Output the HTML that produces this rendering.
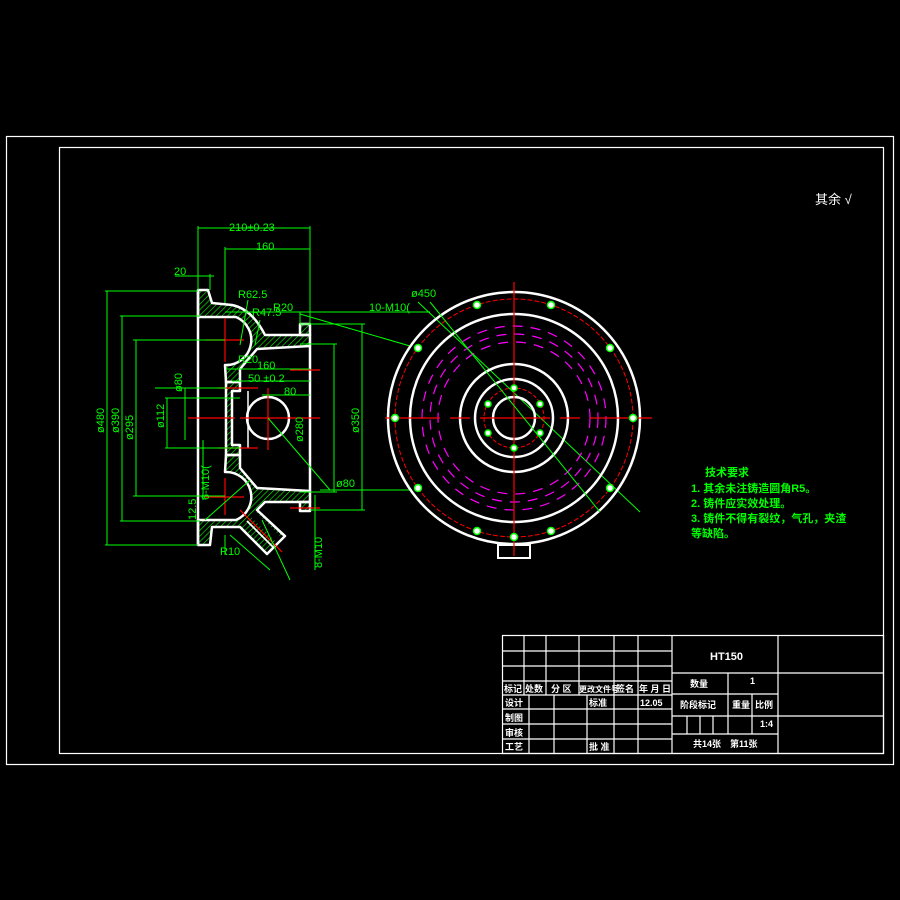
<!DOCTYPE html>
<html><head><meta charset="utf-8">
<style>
html,body{margin:0;padding:0;background:#000;}
svg{display:block}
text{font-family:"Liberation Sans","Noto Sans CJK SC",sans-serif;}
</style></head>
<body>
<svg width="900" height="900" viewBox="0 0 900 900" xmlns="http://www.w3.org/2000/svg">
<defs>
<pattern id="h" width="4" height="4" patternUnits="userSpaceOnUse" patternTransform="rotate(45)">
<line x1="0" y1="0" x2="0" y2="4" stroke="#0f0" stroke-width="1.2"/>
</pattern>
</defs>
<rect width="900" height="900" fill="#000"/>
<rect x="6.5" y="136.5" width="887" height="628" fill="none" stroke="#fff" stroke-width="1.2"/>
<rect x="59.5" y="147.5" width="824" height="606" fill="none" stroke="#fff" stroke-width="1.2"/>

<!-- ===== left section view ===== -->
<g stroke="#fff" stroke-width="2.5" fill="url(#h)" stroke-linejoin="round">
<!-- top -->
<path d="M226,382 L240,382 L240,369 L257,349 L310,346 L310,335 L265,335 Q252,309 232,305 L212,303 L208,290 L198,290 L198,317 L236,317 A25,25 0 0 1 225,365 Z"/>
<path d="M300,324 L310,324 L310,335 L300,335 Z"/>
<!-- middle wall -->
<path d="M226,382 L240,382 L240,391 L232,391 L232,445 L240,445 L240,455 L226,455 Z"/>
<!-- bottom -->
<path d="M226,455 L240,455 L240,468 L257,488 L310,491 L310,502 L265,502 L257,510 L285,536 L267,554 L240,527 L212,527 L210,545 L198,545 L198,520 L236,520 A25,25 0 0 0 225,472 Z"/>
<path d="M300,502 L310,502 L310,511 L300,511 Z"/>
</g>
<g stroke="#fff" stroke-width="2.5" fill="none">
<path d="M198,290 L198,545"/>
<path d="M310,346 L310,491"/>
<line x1="248" y1="391" x2="248" y2="448" stroke-width="1.5"/>
<path d="M253,514 L279,540" stroke="#000" stroke-width="7"/>
<path d="M247,521 L273,547" stroke="#fff" stroke-width="1.8"/>
<path d="M258,511 L283,535" stroke="#fff" stroke-width="1.8"/>
<circle cx="268" cy="418" r="21"/>
</g>
<g stroke="#f00" stroke-width="1.2">
<line x1="188" y1="418" x2="235" y2="418"/><line x1="240" y1="418" x2="320" y2="418"/>
<line x1="268" y1="388" x2="268" y2="450"/>
<line x1="205" y1="340" x2="244" y2="340"/><line x1="225" y1="318" x2="225" y2="362"/>
<line x1="205" y1="497" x2="244" y2="497"/><line x1="225" y1="478" x2="225" y2="515"/>
<line x1="218" y1="388" x2="258" y2="388"/><line x1="218" y1="448" x2="258" y2="448"/>
<line x1="290" y1="370" x2="320" y2="370"/><line x1="290" y1="508" x2="320" y2="508"/>
<line x1="240" y1="510" x2="282" y2="552"/>
</g>
<g stroke="#0f0" stroke-width="1" fill="none">
<line x1="198" y1="228" x2="310" y2="228"/><line x1="198" y1="226" x2="198" y2="290"/><line x1="310" y1="226" x2="310" y2="324"/>
<line x1="225" y1="249" x2="310" y2="249"/><line x1="225" y1="247" x2="225" y2="303"/>
<line x1="175" y1="276" x2="214" y2="276"/><line x1="210" y1="274" x2="210" y2="290"/>
<line x1="105" y1="291" x2="198" y2="291"/><line x1="107" y1="291" x2="107" y2="545"/><line x1="105" y1="545" x2="198" y2="545"/>
<line x1="120" y1="316" x2="200" y2="316"/><line x1="122" y1="316" x2="122" y2="521"/><line x1="120" y1="521" x2="200" y2="521"/>
<line x1="133" y1="340" x2="225" y2="340"/><line x1="136" y1="340" x2="136" y2="496"/><line x1="133" y1="496" x2="225" y2="496"/>
<line x1="155" y1="388" x2="226" y2="388"/><line x1="185" y1="388" x2="185" y2="440"/>
<line x1="165" y1="398" x2="240" y2="398"/><line x1="167" y1="398" x2="167" y2="448"/><line x1="165" y1="448" x2="240" y2="448"/>
<line x1="226" y1="369" x2="310" y2="369"/><line x1="232" y1="381" x2="310" y2="381"/><line x1="262" y1="395" x2="310" y2="395"/>
<line x1="300" y1="344" x2="337" y2="344"/><line x1="334" y1="344" x2="334" y2="492"/><line x1="300" y1="492" x2="337" y2="492"/>
<line x1="300" y1="324" x2="365" y2="324"/><line x1="362" y1="324" x2="362" y2="510"/><line x1="310" y1="510" x2="365" y2="510"/>
<line x1="320" y1="490" x2="410" y2="490"/>
<line x1="225" y1="312" x2="430" y2="312"/><line x1="300" y1="312" x2="300" y2="324"/>
<line x1="300" y1="314" x2="410" y2="346"/>
<line x1="268" y1="418" x2="330" y2="490"/>
<line x1="315" y1="495" x2="315" y2="570"/>
<line x1="203" y1="440" x2="203" y2="500"/>
<line x1="262" y1="520" x2="290" y2="580"/><line x1="230" y1="535" x2="270" y2="570"/>
<line x1="225" y1="535" x2="225" y2="555"/>
<line x1="248" y1="300" x2="240" y2="345"/><line x1="260" y1="320" x2="255" y2="345"/>
<line x1="418" y1="302" x2="640" y2="512"/>
<line x1="205" y1="520" x2="250" y2="480"/>
</g>
<g fill="#0f0" font-size="11">
<text x="229" y="231">210±0.23</text>
<text x="256" y="250">160</text>
<text x="174" y="275">20</text>
<text x="238" y="298">R62.5</text>
<text x="252" y="316">R47.5</text>
<text x="273" y="311">R20</text>
<text x="238" y="363">R20</text>
<text x="257" y="369">160</text>
<text x="248" y="382">50 ±0.2</text>
<text x="284" y="395">80</text>
<text x="369" y="311">10-M10(</text>
<text x="411" y="297">ø450</text>
<text x="336" y="487">ø80</text>
<text x="220" y="555">R10</text>
<text transform="translate(104,433) rotate(-90)">ø480</text>
<text transform="translate(119,433) rotate(-90)">ø390</text>
<text transform="translate(133,440) rotate(-90)">ø295</text>
<text transform="translate(164,428) rotate(-90)">ø112</text>
<text transform="translate(182,392) rotate(-90)">ø80</text>
<text transform="translate(303,442) rotate(-90)">ø280</text>
<text transform="translate(359,433) rotate(-90)">ø350</text>
<text transform="translate(209,500) rotate(-90)">6-M10(</text>
<text transform="translate(322,568) rotate(-90)">8-M10</text>
<text transform="translate(196,520) rotate(-90)">12.5</text>
</g>

<!-- ===== circular view ===== -->
<g fill="none">
<circle cx="514" cy="418" r="126" stroke="#fff" stroke-width="2.5"/>
<circle cx="514" cy="418" r="104" stroke="#fff" stroke-width="2.5"/>
<circle cx="514" cy="418" r="54" stroke="#fff" stroke-width="2.5"/>
<circle cx="514" cy="418" r="39" stroke="#fff" stroke-width="2.5"/>
<circle cx="514" cy="418" r="21" stroke="#fff" stroke-width="2.5"/>
<circle cx="514" cy="418" r="119" stroke="#f00" stroke-width="1" stroke-dasharray="5,2"/>
<circle cx="514" cy="418" r="30" stroke="#f00" stroke-width="1" stroke-dasharray="4,2"/>
<circle cx="514" cy="418" r="92" stroke="#f0f" stroke-width="1.2" stroke-dasharray="10,8"/>
<circle cx="514" cy="418" r="84" stroke="#f0f" stroke-width="1.2" stroke-dasharray="10,8"/>
<circle cx="514" cy="418" r="76" stroke="#f0f" stroke-width="1.2" stroke-dasharray="10,8"/>
<rect x="498" y="545" width="32" height="13" stroke="#fff" stroke-width="2"/>
</g>
<g stroke="#f00" stroke-width="1.2">
<line x1="385" y1="418" x2="440" y2="418"/><line x1="450" y1="418" x2="470" y2="418"/><line x1="480" y1="418" x2="550" y2="418"/><line x1="560" y1="418" x2="580" y2="418"/><line x1="590" y1="418" x2="652" y2="418"/>
<line x1="514" y1="282" x2="514" y2="556"/>
</g>
<line x1="430" y1="302" x2="600" y2="512" stroke="#0f0" stroke-width="1"/>
<g fill="#fff" stroke="#0f0" stroke-width="1.5">
<circle cx="395" cy="418" r="3.5"/><circle cx="633" cy="418" r="3.5"/>
<circle cx="418" cy="348" r="3.5"/><circle cx="610" cy="348" r="3.5"/>
<circle cx="418" cy="488" r="3.5"/><circle cx="610" cy="488" r="3.5"/>
<circle cx="477" cy="305" r="3.5"/><circle cx="551" cy="305" r="3.5"/>
<circle cx="477" cy="531" r="3.5"/><circle cx="551" cy="531" r="3.5"/>
<circle cx="514" cy="537" r="3.5"/>
<circle cx="514" cy="388" r="3"/><circle cx="514" cy="448" r="3"/>
<circle cx="488" cy="404" r="3"/><circle cx="540" cy="404" r="3"/>
<circle cx="488" cy="433" r="3"/><circle cx="540" cy="433" r="3"/>
</g>

<text x="815" y="204" fill="#fff" font-size="13">其余 √</text>
<g fill="#0f0" font-size="11" font-weight="bold">
<text x="705" y="476">技术要求</text>
<text x="691" y="492">1. 其余未注铸造圆角R5。</text>
<text x="691" y="507">2. 铸件应实效处理。</text>
<text x="691" y="522">3. 铸件不得有裂纹，气孔，夹渣</text>
<text x="691" y="537">等缺陷。</text>
</g>

<g stroke="#fff" stroke-width="1.2" fill="none">
<rect x="502.5" y="635.5" width="381" height="118"/>
<line x1="502" y1="651" x2="672" y2="651"/><line x1="502" y1="666" x2="672" y2="666"/>
<line x1="502" y1="681" x2="672" y2="681"/><line x1="502" y1="695" x2="672" y2="695"/>
<line x1="502" y1="709" x2="672" y2="709"/><line x1="502" y1="724" x2="672" y2="724"/>
<line x1="502" y1="739" x2="672" y2="739"/>
<line x1="524" y1="635" x2="524" y2="695"/><line x1="546" y1="635" x2="546" y2="695"/>
<line x1="579" y1="635" x2="579" y2="695"/><line x1="614" y1="635" x2="614" y2="753"/>
<line x1="638" y1="635" x2="638" y2="753"/><line x1="672" y1="635" x2="672" y2="753"/>
<line x1="529" y1="695" x2="529" y2="753"/><line x1="554" y1="695" x2="554" y2="753"/>
<line x1="587" y1="695" x2="587" y2="753"/>
<line x1="778" y1="635" x2="778" y2="753"/>
<line x1="672" y1="673" x2="884" y2="673"/><line x1="672" y1="694" x2="778" y2="694"/>
<line x1="672" y1="716" x2="884" y2="716"/><line x1="672" y1="734" x2="778" y2="734"/>
<line x1="728" y1="673" x2="728" y2="734"/><line x1="752" y1="694" x2="752" y2="734"/>
<line x1="687" y1="716" x2="687" y2="734"/><line x1="700" y1="716" x2="700" y2="734"/><line x1="713" y1="716" x2="713" y2="734"/>
</g>
<g fill="#fff" font-size="9" font-weight="bold">
<text x="504" y="692">标记</text><text x="525" y="692">处数</text><text x="551" y="692">分 区</text>
<text x="579" y="692" font-size="8">更改文件号</text><text x="616" y="692">签名</text><text x="639" y="692">年 月 日</text>
<text x="505" y="706">设计</text><text x="589" y="706">标准</text><text x="640" y="706">12.05</text>
<text x="505" y="721">制图</text><text x="505" y="736">审核</text><text x="505" y="750">工艺</text>
<text x="589" y="750">批 准</text>
<text x="710" y="660" font-size="11">HT150</text>
<text x="690" y="687">数量</text><text x="750" y="684">1</text>
<text x="680" y="708">阶段标记</text><text x="732" y="708">重量</text><text x="755" y="708">比例</text>
<text x="760" y="727">1:4</text>
<text x="693" y="747">共14张　第11张</text>
</g>
</svg>
</body></html>
